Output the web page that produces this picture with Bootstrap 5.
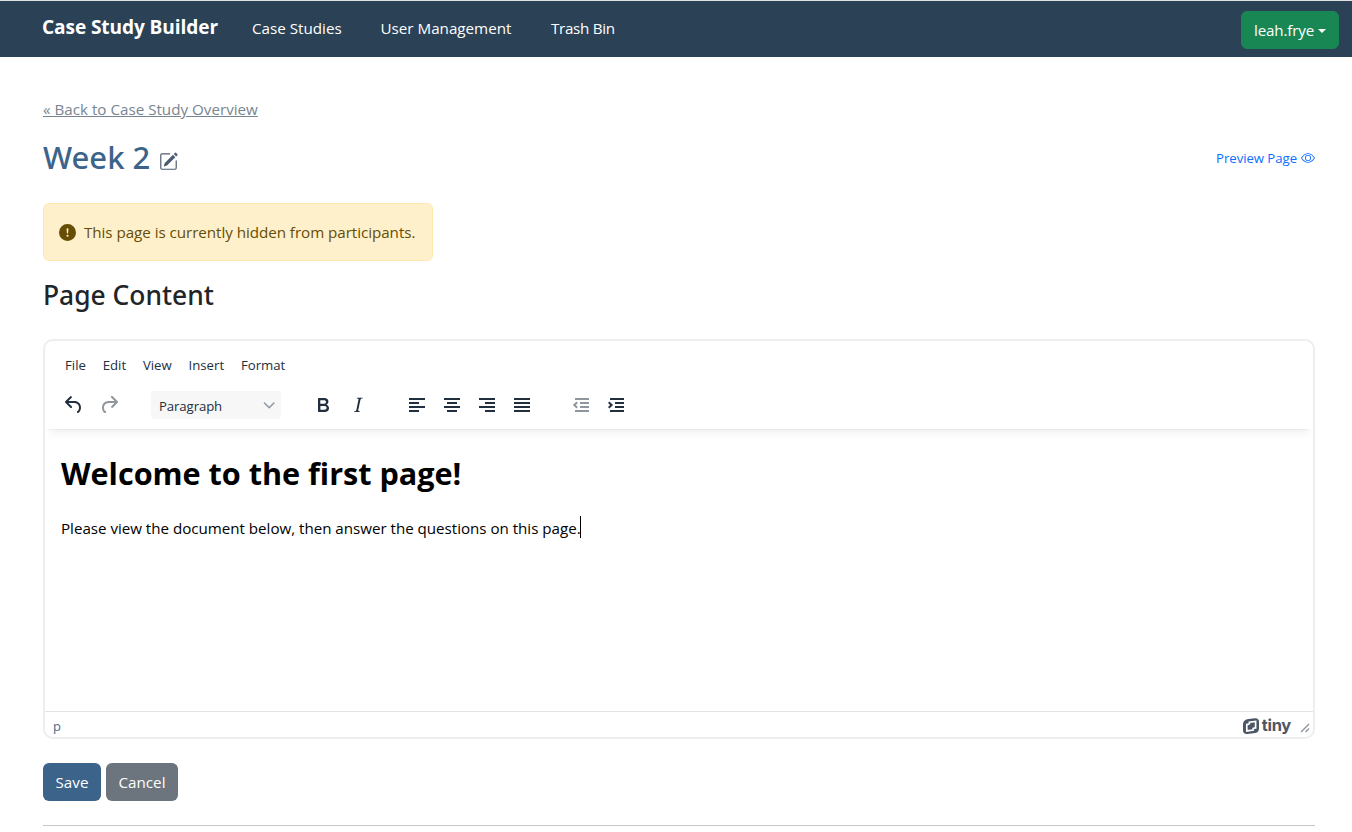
<!DOCTYPE html>
<html lang="en">
<head>
<meta charset="utf-8">
<meta name="viewport" content="width=device-width, initial-scale=1">
<title>Case Study Builder</title>
<link href="https://cdn.jsdelivr.net/npm/bootstrap@5.3.0/dist/css/bootstrap.min.css" rel="stylesheet">
<style>
  body{font-family:"Open Sans","Noto Sans",sans-serif;font-size:15.2px;line-height:24px;overflow:hidden}
  svg{display:block;flex:none}
  .topbar{height:57px;background:#2b4156;border-top:1px solid #dde1e0;padding:0 13px 0 42px}
  .topbar .navbar-brand{font-size:19.1px;font-weight:700;letter-spacing:-.1px;width:210px;margin:0;padding:0 0 5px;line-height:30px}
  .topbar .nav{margin-top:-2px}
  .topbar .nav-link{padding:0;color:#fff}
  .btn{font-size:15.2px;line-height:24px;padding:6px 12px;border-radius:6px}
  .user-btn{width:98px;height:38px;margin-top:2px;letter-spacing:-.15px;white-space:nowrap}
  .user-btn.dropdown-toggle::after{margin-left:4px;border-top-width:4px;border-right-width:4px;border-left-width:4px;vertical-align:3.5px}
  .page{padding:40px 37px 0 43px}
  .back-link{color:#788591;line-height:24px}
  .title-row{height:38px;margin-top:18px}
  .page-title{font:500 31px/38px "Noto Sans",sans-serif;color:#3c638a;margin:-2px 0 0}
  .edit-icon{color:#4b5c72;margin:6px 0 0 9px}
  .preview{font-size:13.2px;color:#0d6efd;letter-spacing:-.05px}
  .hidden-note{width:390px;height:58px;margin:26px 0 0;padding:0 16px 0 15px;background:#fff0cc;border-color:#ffe9b1;color:#664d03;letter-spacing:-.05px}
  .section-title{font:500 26.4px/34px "Noto Sans",sans-serif;margin:17px 0 0}
  .editor{height:400px;margin-top:27px;border:2px solid #eee;border-radius:10px;color:#222f3e;overflow:hidden}
  .editor-head{height:88px;box-shadow:0 2px 2px -2px rgba(34,47,62,.12),0 8px 8px -4px rgba(34,47,62,.07);margin:0 1px;padding:10px 0 0 19px}
  .menus{font-size:13.2px;line-height:28px;height:28px}
  .menus span{margin-right:16.8px}
  .tools{height:28px;margin:12px 0 0 -3px}
  .tools .off{opacity:.5}
  .block-select{width:130px;height:28px;background:#f7f7f7;border-radius:3px;font-size:13.2px;line-height:28px;letter-spacing:-.1px;padding:1px 4px 0 8px}
  .document{padding:24px 17px 0 16px;color:#000}
  .document h1{font-size:30.6px;line-height:40px;font-weight:700;letter-spacing:-.02px;margin:0}
  .document p{font-size:15.15px;line-height:22px;letter-spacing:-.015px;margin:24px 0 0}
  .caret{width:1px;height:22px;background:#000;margin:23px 0 0 -1px}
  .status{height:26px;border-top:1px solid #e3e3e3;padding:3px 3px 0 8px;font-size:13px;color:#4b6b8e}
  .tiny-name{font:700 16.5px/20px "Inter",sans-serif;color:#4d5664;letter-spacing:-.3px;margin:-2px 9px 0 3px}
  .btn-save{background:#3c638a;color:#fff;width:58px}
  .btn-cancel{background:#6c757d;color:#fff;width:72px}
  .divider{height:1px;background:#c4c6c8;margin-top:24px}
</style>
</head>
<body>
<nav class="topbar d-flex align-items-center text-white">
  <a class="navbar-brand text-white" href="#">Case Study Builder</a>
  <ul class="nav flex-grow-1">
    <li style="width:128.5px"><a class="nav-link" href="#">Case Studies</a></li>
    <li style="width:170.5px"><a class="nav-link" href="#">User Management</a></li>
    <li><a class="nav-link" style="letter-spacing:-.3px" href="#">Trash Bin</a></li>
  </ul>
  <button class="btn btn-success dropdown-toggle user-btn" data-bs-toggle="dropdown">leah.frye</button>
</nav>

<main class="page">
  <a class="back-link d-block" href="#">« Back to Case Study Overview</a>
  <div class="title-row d-flex align-items-center justify-content-between">
    <div class="d-flex align-items-center">
      <h1 class="page-title">Week 2</h1>
      <svg class="edit-icon" width="19" height="19" viewBox="0 0 16 16" fill="currentColor"><path d="M15.502 1.94a.5.5 0 0 1 0 .706L14.459 3.69l-2-2L13.502.646a.5.5 0 0 1 .707 0l1.293 1.293zm-1.750 2.456-2-2L4.939 9.210a.5.5 0 0 0-.121.196l-.805 2.414a.250.250 0 0 0 .316.316l2.414-.805a.5.5 0 0 0 .196-.120l6.813-6.814z"/><path fill-rule="evenodd" d="M1 13.500A1.500 1.500 0 0 0 2.500 15h11a1.500 1.500 0 0 0 1.500-1.500v-6a.5.5 0 0 0-1 0v6a.5.5 0 0 1-.5.5h-11a.5.5 0 0 1-.5-.5v-11a.5.5 0 0 1 .5-.5H9a.5.5 0 0 0 0-1H2.500A1.500 1.500 0 0 0 1 2.500v11z"/></svg>
    </div>
    <a class="preview d-flex align-items-center gap-1 text-decoration-none" href="#">Preview Page
      <svg width="14" height="14" viewBox="0 0 16 16" fill="currentColor"><path d="M16 8s-3-5.500-8-5.500S0 8 0 8s3 5.500 8 5.500S16 8 16 8zM1.173 8a13.133 13.133 0 0 1 1.660-2.043C4.120 4.668 5.880 3.500 8 3.500c2.120 0 3.879 1.168 5.168 2.457A13.133 13.133 0 0 1 14.828 8c-.058.087-.122.183-.195.288-.335.480-.830 1.120-1.465 1.755C11.879 11.332 10.119 12.500 8 12.500c-2.120 0-3.879-1.168-5.168-2.457A13.134 13.134 0 0 1 1.172 8z"/><path d="M8 5.500a2.500 2.500 0 1 0 0 5 2.500 2.500 0 0 0 0-5zM4.500 8a3.500 3.500 0 1 1 7 0 3.500 3.500 0 0 1-7 0z"/></svg>
    </a>
  </div>

  <div class="alert hidden-note d-flex align-items-center">
    <svg width="17" height="17" viewBox="0 0 16 16" fill="currentColor"><path d="M16 8A8 8 0 1 1 0 8a8 8 0 0 1 16 0zM8 4a.905.905 0 0 0-.9.995l.350 3.507a.552.552 0 0 0 1.100 0l.350-3.507A.905.905 0 0 0 8 4zm.002 6a1 1 0 1 0 0 2 1 1 0 0 0 0-2z"/></svg>
    <span class="text-nowrap ms-2">This page is currently hidden from participants.</span>
  </div>

  <h2 class="section-title">Page Content</h2>

  <div class="editor d-flex flex-column">
    <div class="editor-head">
      <div class="menus d-flex"><span>File</span><span>Edit</span><span>View</span><span>Insert</span><span>Format</span></div>
      <div class="tools d-flex align-items-center">
        <svg width="24" height="24" fill="#222f3e"><path d="M6.400 8H12c3.700 0 6.200 2 6.800 5.100.6 2.700-.4 5.600-2.300 6.800a1 1 0 0 1-1-1.800c1.100-.6 1.800-2.700 1.400-4.600-.5-2.100-2.100-3.500-4.900-3.500H6.400l3.300 3.300a1 1 0 1 1-1.400 1.400l-5-5a1 1 0 0 1 0-1.400l5-5a1 1 0 0 1 1.400 1.400L6.400 8Z"/></svg>
        <svg class="off" style="margin-left:11px" width="24" height="24" fill="#222f3e"><path d="M17.600 10H12c-2.800 0-4.400 1.400-4.900 3.500-.4 2 .3 4 1.400 4.600a1 1 0 1 1-1 1.800c-2-1.200-2.900-4.100-2.300-6.800.6-3 3-5.100 6.800-5.100h5.600l-3.300-3.300a1 1 0 1 1 1.400-1.400l5 5a1 1 0 0 1 0 1.400l-5 5a1 1 0 0 1-1.400-1.400l3.300-3.300Z"/></svg>
        <div class="block-select d-flex align-items-center justify-content-between" style="margin-left:30px">Paragraph
          <svg width="16" height="16" fill="none" stroke="#9299a2" stroke-width="1.600" stroke-linecap="round" stroke-linejoin="round"><path d="m3.500 5 4.700 4.700L12.900 5"/></svg>
        </div>
        <svg style="margin-left:30px" width="24" height="24" fill="#222f3e"><path fill-rule="evenodd" d="M7.800 19c-.3 0-.5 0-.6-.2l-.2-.5V5.700c0-.2 0-.4.2-.5l.6-.2h5c1.500 0 2.700.3 3.500 1 .7.6 1.100 1.400 1.100 2.500a3 3 0 0 1-.6 1.900c-.4.6-1 1-1.600 1.200.4.1.9.3 1.300.6s.8.7 1 1.200c.4.4.5 1 .5 1.600 0 1.300-.4 2.300-1.300 3-.8.7-2.100 1-3.800 1H7.800Zm5-8.300c.6 0 1.200-.1 1.600-.5.4-.3.6-.7.6-1.300 0-1.100-.8-1.700-2.300-1.700H9.300v3.500h3.400Zm.5 6c.7 0 1.300-.1 1.700-.4.4-.4.6-.9.6-1.500s-.2-1-.7-1.400c-.4-.3-1-.4-2-.4H9.400v3.800h4Z"/></svg>
        <svg style="margin-left:11px" width="24" height="24" fill="#222f3e"><path d="m16.700 4.700-.1.900h-.3c-.6 0-1 0-1.400.3-.3.3-.4.6-.5 1.100l-2.100 9.800v.6c0 .5.4.8 1.400.8h.2l-.2.8H8l.2-.8h.2c1.100 0 1.800-.5 2-1.500l2-9.800.1-.5c0-.6-.4-.8-1.400-.8h-.3l.2-.9h5.700Z"/></svg>
        <svg style="margin-left:35px" width="24" height="24" stroke="#222f3e" stroke-width="2"><path d="M4 6h16M4 10h10M4 14h16M4 18h10"/></svg>
        <svg style="margin-left:11px" width="24" height="24" stroke="#222f3e" stroke-width="2"><path d="M4 6h16M7 10h10M4 14h16M7 18h10"/></svg>
        <svg style="margin-left:11px" width="24" height="24" stroke="#222f3e" stroke-width="2"><path d="M4 6h16M10 10h10M4 14h16M10 18h10"/></svg>
        <svg style="margin-left:11px" width="24" height="24" stroke="#222f3e" stroke-width="2"><path d="M4 6h16M4 10h16M4 14h16M4 18h16"/></svg>
        <svg class="off" style="margin-left:35px" width="24" height="24" fill="none" stroke="#222f3e" stroke-width="2"><path d="M6 6h14M11 10h9M11 14h9M6 18h14M8.200 9.300 5.300 12l2.900 2.700"/></svg>
        <svg style="margin-left:11px" width="24" height="24" fill="none" stroke="#222f3e" stroke-width="2"><path d="M6 6h14M11 10h9M11 14h9M6 18h14M4.700 9.300 7.600 12l-2.900 2.700"/></svg>
      </div>
    </div>
    <div class="document flex-grow-1">
      <h1>Welcome to the first page!</h1>
      <div class="d-flex"><p>Please view the document below, then answer the questions on this page.</p><span class="caret"></span></div>
    </div>
    <div class="status d-flex align-items-center">
      <span class="flex-grow-1">p</span>
      <svg width="16" height="16" viewBox="0 0 16 16"><path fill="#4d5664" d="M5.500 1 12 .200C14.500 0 16 1.300 16 3.500v6.700c0 2.600-1.200 4.300-3.700 4.700l-7.800 1C1.700 16.200 0 14.800 0 12.500V6C0 3.300 2 1.500 5.500 1Z"/><path fill="none" stroke="#fff" stroke-width="1.700" d="M6.400 6.200V4.200l6.200-.8v6.500l-2.100.3M6.300 6.200l-2.500.3v6.400l6.400-.9V9.800"/></svg>
      <span class="tiny-name">tiny</span>
      <svg style="margin-top:3px" width="10" height="10" fill="none" stroke="#8b939b" stroke-width="1.300"><path d="M1 9 9 1M5.500 9 9 5.500"/></svg>
    </div>
  </div>

  <div class="d-flex mt-4" style="gap:5px">
    <button class="btn btn-save border-0 px-0" style="height:38px">Save</button>
    <button class="btn btn-cancel border-0 px-0" style="height:38px">Cancel</button>
  </div>
  <div class="divider"></div>
</main>
<script src="https://cdn.jsdelivr.net/npm/bootstrap@5.3.0/dist/js/bootstrap.bundle.min.js"></script>
</body>
</html>
